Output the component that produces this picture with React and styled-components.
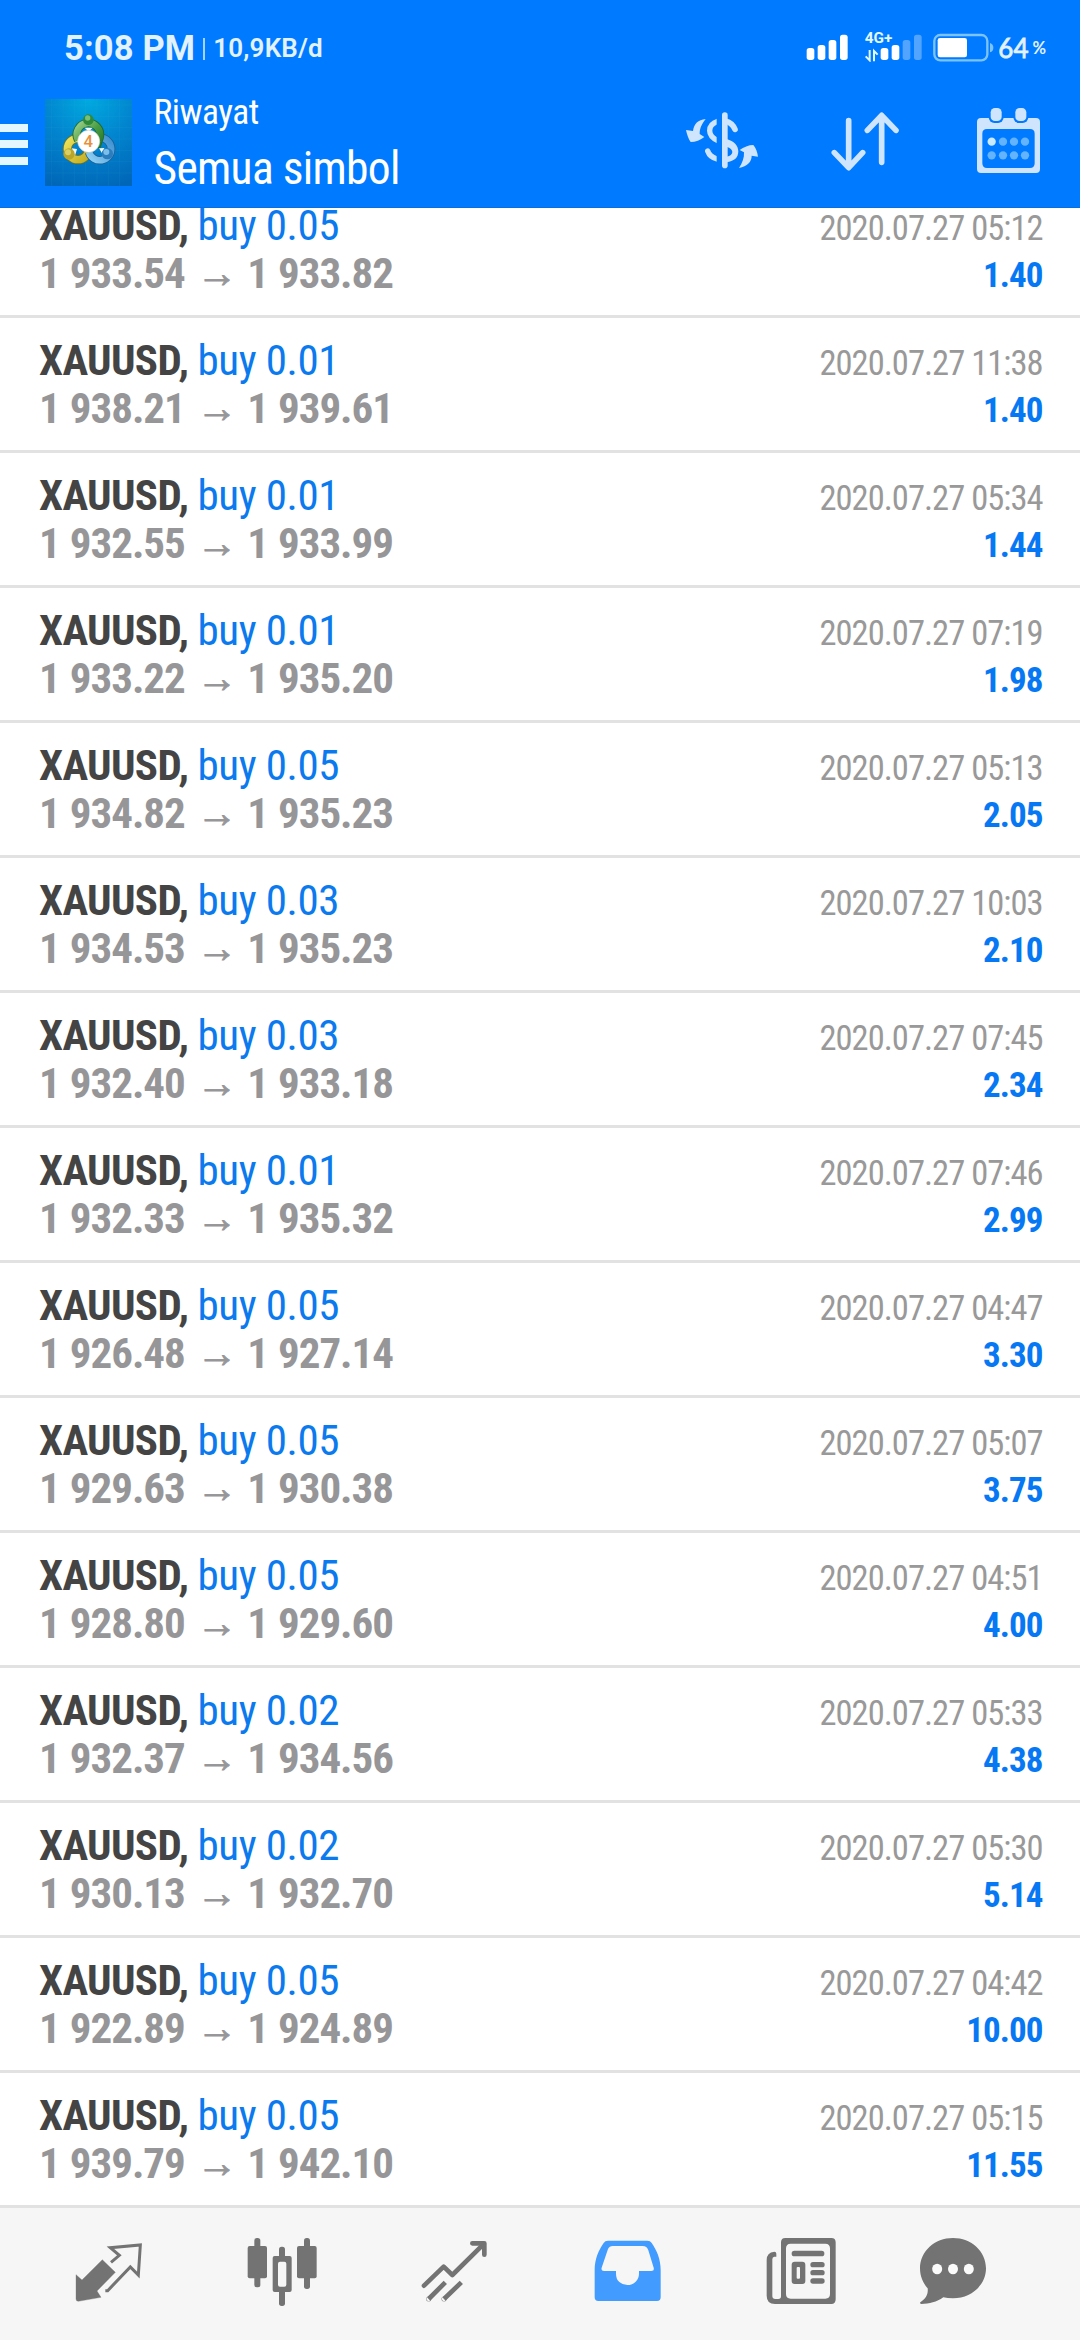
import React from "react";
import styled, { createGlobalStyle } from "styled-components";

const BLUE = "#007aff";
const GREY_ICON = "#737373";
const BAR_ICON = "#cfe5fd";

const GlobalStyle = createGlobalStyle`
  body {
    margin: 0;
    background: #fff;
    font-family: "Roboto Condensed", Roboto, sans-serif;
  }
  * { box-sizing: border-box; }
  svg { display: block; flex: none; }
`;

const Screen = styled.div`
  width: 1080px;
  height: 2340px;
  display: flex;
  flex-direction: column;
  overflow: hidden;
  background: #fff;
`;

const Header = styled.header`
  flex: none;
  height: 208px;
  background: ${BLUE};
  border-bottom: 1px solid #0a6fdc;
`;

const StatusBar = styled.div`
  height: 82px;
  padding: 18px 34px 0 64px;
  display: flex;
  justify-content: space-between;
  color: #e2f2ff;
  line-height: 60px;
  font-family: Roboto, sans-serif;
  white-space: nowrap;
`;

const StatusLeft = styled.div`
  display: flex;
`;

const Clock = styled.span`
  font-size: 34.5px;
  font-weight: 700;
  letter-spacing: 0.15px;
`;

const StatusDivider = styled.span`
  width: 2px;
  height: 22px;
  margin: 20px 8px 0;
  background: #a5d2ff;
`;

const NetSpeed = styled.span`
  font-size: 26px;
  font-weight: 600;
  letter-spacing: 0.2px;
`;

const StatusRight = styled.div`
  display: flex;
`;

const StatusGlyph = styled.svg`
  width: ${(p) => p.$w}px;
  height: 32px;
  margin: 12px ${(p) => p.$gap}px 0 0;
`;

const BatteryLevel = styled.span`
  font-family: Lato, sans-serif;
  font-size: ${(p) => p.$size}px;
  font-weight: ${(p) => p.$weight};
  margin-right: ${(p) => p.$gap || 0}px;
  -webkit-text-stroke: ${(p) => p.$stroke || 0}px currentColor;
`;

const AppBar = styled.div`
  height: 125px;
  display: flex;
  align-items: flex-start;
  padding-right: 39px;
`;

const MenuButton = styled.div`
  width: 28px;
  height: 41px;
  margin-top: 41.5px;
  display: flex;
  flex-direction: column;
  justify-content: space-between;
`;

const MenuLine = styled.span`
  height: 8px;
  background: #e4f7ff;
`;

const Logo = styled.svg`
  width: 87px;
  height: 87px;
  margin: 17px 0 0 16.5px;
`;

const Titles = styled.div`
  flex: 1;
  margin-left: 22px;
  padding-top: 7px;
  color: #fff;
  white-space: nowrap;
`;

const Subtitle = styled.div`
  font-size: 35.5px;
  line-height: 47px;
  letter-spacing: -0.5px;
`;

const Title = styled.div`
  font-size: 45.5px;
  line-height: 65px;
  letter-spacing: -0.7px;
`;

const Actions = styled.div`
  display: flex;
  margin-top: 24px;
`;

const ActionIcon = styled.svg`
  width: ${(p) => p.$w}px;
  height: 68px;
  margin-left: ${(p) => p.$gap || 0}px;
`;

const DealList = styled.main`
  flex: none;
  height: 2000px;
  display: flex;
  flex-direction: column;
  justify-content: flex-end;
  overflow: hidden;
`;

const DealRow = styled.div`
  flex: none;
  height: 135px;
  padding: 0 37.5px 0 39px;
  display: flex;
  justify-content: space-between;
  border-bottom: 3px solid #e2e2e2;
  line-height: 48px;
  white-space: pre;
`;

const DealInfo = styled.div`
  padding-top: 18px;
  font-size: 43px;
`;

const DealLine = styled.div`
  height: 48px;
  display: flex;
`;

const Symbol = styled.span`
  width: 158.5px;
  font-weight: 700;
  letter-spacing: -0.65px;
  color: #444;
`;

const Side = styled.span`
  letter-spacing: -0.4px;
  color: #0a7aee;
`;

const Price = styled.span`
  font-weight: 700;
  letter-spacing: -1.05px;
  word-spacing: 1.3px;
  color: #969698;
`;

const Arrow = styled.span`
  width: 62.5px;
  padding-left: 12px;
  font-family: "Liberation Sans", sans-serif;
  font-size: 41px;
  -webkit-text-stroke: 0.9px currentColor;
  color: #969698;
`;

const DealResult = styled.div`
  padding-top: 21px;
  text-align: right;
`;

const Time = styled.div`
  height: 48px;
  font-size: 34.5px;
  letter-spacing: -0.97px;
  color: #999;
`;

const Profit = styled.div`
  height: 48px;
  font-size: 35px;
  font-weight: 700;
  letter-spacing: -0.95px;
  color: #0778f4;
`;

const TabBar = styled.nav`
  flex: none;
  height: 132px;
  padding: 28px 0 0 22px;
  display: grid;
  grid-template-columns: repeat(5, 173px) 132px;
  justify-items: center;
  align-items: start;
  background: #f6f6f6;
`;

const TabIcon = styled.svg`
  width: ${(p) => p.$w}px;
  height: 72px;
`;

const deals = [
  ["0.05", "1 933.54", "1 933.82", "2020.07.27 05:12", "1.40"],
  ["0.01", "1 938.21", "1 939.61", "2020.07.27 11:38", "1.40"],
  ["0.01", "1 932.55", "1 933.99", "2020.07.27 05:34", "1.44"],
  ["0.01", "1 933.22", "1 935.20", "2020.07.27 07:19", "1.98"],
  ["0.05", "1 934.82", "1 935.23", "2020.07.27 05:13", "2.05"],
  ["0.03", "1 934.53", "1 935.23", "2020.07.27 10:03", "2.10"],
  ["0.03", "1 932.40", "1 933.18", "2020.07.27 07:45", "2.34"],
  ["0.01", "1 932.33", "1 935.32", "2020.07.27 07:46", "2.99"],
  ["0.05", "1 926.48", "1 927.14", "2020.07.27 04:47", "3.30"],
  ["0.05", "1 929.63", "1 930.38", "2020.07.27 05:07", "3.75"],
  ["0.05", "1 928.80", "1 929.60", "2020.07.27 04:51", "4.00"],
  ["0.02", "1 932.37", "1 934.56", "2020.07.27 05:33", "4.38"],
  ["0.02", "1 930.13", "1 932.70", "2020.07.27 05:30", "5.14"],
  ["0.05", "1 922.89", "1 924.89", "2020.07.27 04:42", "10.00"],
  ["0.05", "1 939.79", "1 942.10", "2020.07.27 05:15", "11.55"],
];

function SignalOne() {
  return (
    <StatusGlyph $w={43} $gap={15} viewBox="18 30 129 96" fill="#fff">
      <rect x="20" y="84" width="23" height="36" rx="8" />
      <rect x="53" y="75" width="23" height="45" rx="8" />
      <rect x="86" y="60" width="23" height="60" rx="8" />
      <rect x="120" y="44" width="23" height="76" rx="8" />
    </StatusGlyph>
  );
}

function SignalTwo() {
  return (
    <StatusGlyph $w={59} $gap={10} viewBox="192 30 177 96" fill="#fff">
      <text x="194" y="68" fontFamily="Roboto, sans-serif" fontWeight="700" fontSize="46" fill="#e2f8ff">4G+</text>
      <path d="M209 90V121L197 109M222 124V93L233 104" fill="none" stroke="#e2f8ff" strokeWidth="6" />
      <rect x="242" y="84" width="23" height="36" rx="8" />
      <rect x="275" y="75" width="23" height="45" rx="8" />
      <rect x="308" y="60" width="23" height="60" rx="8" opacity="0.32" />
      <rect x="342" y="44" width="23" height="76" rx="8" opacity="0.32" />
    </StatusGlyph>
  );
}

function Battery() {
  return (
    <StatusGlyph $w={61} $gap={4} viewBox="399 30 183 96">
      <rect x="403" y="45" width="159" height="76" rx="18" fill="none" stroke="#7cc4ff" strokeWidth="7" />
      <rect x="413" y="54" width="88" height="58" rx="7" fill="#fff" />
      <path d="M570 69Q580 72 580 83Q580 94 570 97Z" fill="#7cc4ff" />
    </StatusGlyph>
  );
}

function AppLogo() {
  return (
    <Logo viewBox="44 42 261 261">
      <defs>
        <radialGradient id="logoBg" cx="50%" cy="0%" r="105%">
          <stop offset="0" stopColor="#00aae0" />
          <stop offset="0.5" stopColor="#0284ce" />
          <stop offset="1" stopColor="#0067b8" />
        </radialGradient>
        <linearGradient id="logoGreen" x1="0" y1="0" x2="1" y2="1">
          <stop offset="0" stopColor="#9ad08a" />
          <stop offset="0.5" stopColor="#4d9f45" />
          <stop offset="1" stopColor="#23762c" />
        </linearGradient>
        <linearGradient id="logoYellow" x1="0" y1="0" x2="1" y2="1">
          <stop offset="0" stopColor="#ece25a" />
          <stop offset="1" stopColor="#c4ad22" />
        </linearGradient>
        <linearGradient id="logoBlue" x1="1" y1="0" x2="0" y2="1">
          <stop offset="0" stopColor="#3d8fd0" />
          <stop offset="1" stopColor="#8fd0f4" />
        </linearGradient>
      </defs>
      <rect x="44" y="42" width="261" height="261" fill="url(#logoBg)" />
      <path
        d="M64 42V303M98 42V303M132 42V303M166 42V303M200 42V303M234 42V303M268 42V303M44 60H305M44 94H305M44 128H305M44 162H305M44 196H305M44 230H305M44 264H305"
        stroke="#4cc0ec"
        strokeOpacity="0.14"
        strokeWidth="2"
      />
      <g fill="none">
        <circle cx="143" cy="192" r="32" stroke="#6f7420" strokeWidth="27" />
        <circle cx="143" cy="192" r="32" stroke="url(#logoYellow)" strokeWidth="22" />
        <path d="M212 158A34 34 0 1 1 176 202" stroke="#1b5f96" strokeWidth="25" />
        <path d="M212 158A34 34 0 1 1 176 202" stroke="url(#logoBlue)" strokeWidth="20" />
        <path d="M143 165A35 35 0 1 1 208 158L198 186" stroke="#1d6a30" strokeWidth="25" />
        <path d="M143 165A35 35 0 1 1 208 158L198 186" stroke="url(#logoGreen)" strokeWidth="20" />
      </g>
      <path d="M124 190L140 192L134 212ZM206 190L222 189L216 206ZM163 128H187L175 140Z" fill="#f4fbf4" />
      <circle cx="174" cy="104" r="16" fill="#2f8a3b" />
      <circle cx="172" cy="99" r="8" fill="#79bf78" />
      <circle cx="116" cy="207" r="17" fill="#b9a52a" />
      <circle cx="113" cy="202" r="9" fill="#d9cf66" />
      <circle cx="231" cy="206" r="17" fill="#2c7dbd" />
      <circle cx="228" cy="201" r="9" fill="#7cc0ea" />
      <circle cx="175" cy="169" r="33" fill="#fff" stroke="#d8d8d0" strokeWidth="2" />
      <text x="174" y="187" textAnchor="middle" fontFamily="Roboto, sans-serif" fontWeight="500" fontSize="50" fill="#e8903c">4</text>
    </Logo>
  );
}

function CurrencyIcon() {
  return (
    <ActionIcon $w={74} viewBox="45 48 222 204" fill={BAR_ICON}>
      <defs>
        <clipPath id="dollarLeft">
          <rect x="45" y="48" width="95" height="204" />
        </clipPath>
      </defs>
      <g clipPath="url(#dollarLeft)" fill="none" stroke={BAR_ICON} strokeWidth="16" strokeLinecap="round">
        <path d="M146 93C128 98 119 109 119 122C119 136 128 145 146 153" />
        <path d="M113 183C118 197 129 205 146 208" />
      </g>
      <rect x="156" y="67" width="17" height="168" rx="8.5" />
      <path d="M168 94C181 97 189 105 195 118" fill="none" stroke={BAR_ICON} strokeWidth="17" strokeLinecap="round" />
      <path d="M170 147C192 154 205 166 205 184C205 204 191 214 170 217V200C181 198 187 193 187 186C187 179 181 174 170 170Z" />
      <path d="M107 87C84 89 72 102 69 123L48 120C51 134 56 148 62 156C76 156 92 150 103 141L89 132C89 114 96 101 107 87Z" />
      <path d="M207 234C232 228 245 216 245 197L264 200C262 186 258 174 250 165C236 165 221 171 209 180L222 187C223 204 217 219 207 234Z" />
    </ActionIcon>
  );
}

function SortIcon() {
  return (
    <ActionIcon $w={70} $gap={71} viewBox="480 48 210 204" fill="none" stroke={BAR_ICON} strokeWidth="17" strokeLinecap="round" strokeLinejoin="round">
      <path d="M536 92V231M493 188L536 233L578 188" />
      <path d="M635 217V78M592 121L635 76L678 121" />
    </ActionIcon>
  );
}

function CalendarIcon() {
  const columns = [965, 999, 1032, 1065];
  return (
    <ActionIcon $w={65} $gap={76} viewBox="918 48 195 204">
      <path
        fill={BAR_ICON}
        fillRule="evenodd"
        d="M933 84H1098Q1110 84 1110 96V237Q1110 249 1098 249H933Q921 249 921 237V96Q921 84 933 84ZM951 117Q937 117 937 131V220Q937 234 951 234H1080Q1094 234 1094 220V131Q1094 117 1080 117Z"
      />
      {[962, 1036].map((x) => (
        <g key={x}>
          <rect x={x - 6} y="49" width="45" height="50" rx="17" fill={BLUE} />
          <rect x={x} y="54" width="33" height="39" rx="13" fill={BAR_ICON} />
        </g>
      ))}
      {[155, 196].map((y, row) =>
        columns.map((x, col) => (
          <circle key={`${x}-${y}`} cx={x} cy={y} r="12.5" fill={row === 0 && col === 0 ? "#c9eaff" : "#63b3ff"} />
        ))
      )}
    </ActionIcon>
  );
}

function QuotesIcon() {
  return (
    <TabIcon $w={68} viewBox="45 48 204 216">
      <path d="M127 119L166 157L111 213L123 232L55 244Q48 244 48 237V164L66 180Z" fill={GREY_ICON} stroke={GREY_ICON} strokeWidth="1" strokeLinejoin="round" />
      <path d="M153 127L178 106L151 83L241 75L235 165L211 141L143 212H136" fill="none" stroke={GREY_ICON} strokeWidth="9" />
    </TabIcon>
  );
}

function ChartIcon() {
  return (
    <TabIcon $w={72} viewBox="555 48 216 216" fill={GREY_ICON}>
      <rect x="580" y="54" width="18" height="148" rx="8" />
      <rect x="560" y="78" width="58" height="97" rx="6" />
      <rect x="654" y="80" width="18" height="40" rx="8" />
      <rect x="654" y="205" width="18" height="53" rx="8" />
      <path fillRule="evenodd" d="M641 108H686Q692 108 692 114V210Q692 216 686 216H641Q635 216 635 210V114Q635 108 641 108ZM657 125Q651 125 651 131V194Q651 200 657 200H670Q676 200 676 194V131Q676 125 670 125Z" />
      <rect x="729" y="54" width="18" height="153" rx="8" />
      <rect x="708" y="78" width="59" height="97" rx="6" />
    </TabIcon>
  );
}

function TradeIcon() {
  return (
    <TabIcon $w={67} viewBox="1083 48 201 216" fill="none" stroke={GREY_ICON} strokeWidth="14" strokeLinejoin="round">
      <path d="M1092 197L1151 140L1177 165L1270 73" strokeLinecap="round" />
      <path d="M1237 70H1273V104" strokeLinecap="round" />
      <path d="M1106 237L1156 187M1152 237L1204 187" />
      <circle cx="1106" cy="237" r="0.5" />
      <circle cx="1152" cy="237" r="0.5" />
    </TabIcon>
  );
}

function HistoryIcon() {
  return (
    <TabIcon $w={67} viewBox="42 48 201 216">
      <path
        fill="#429bff"
        fillRule="evenodd"
        d="M84 62H202Q211 62 215 69C230 90 242 118 242 150V232Q242 243 231 243H55Q44 243 44 232V150C44 118 56 90 71 69Q75 62 84 62ZM98 78Q88 78 84 87L65 143Q62 153 72 153H108V161Q108 177 118 186Q128 195 142 195Q157 195 167 185Q177 175 177 161V153H214Q224 153 221 143L205 91Q201 78 188 78Z"
      />
    </TabIcon>
  );
}

function NewsIcon() {
  return (
    <TabIcon $w={70} viewBox="558 48 210 216" fill={GREY_ICON}>
      <path
        fillRule="evenodd"
        d="M616 54H754Q767 54 767 67V238Q767 252 754 252H585Q560 252 560 227V120Q560 97 583 95Q589 95 589 101V110H583Q577 110 577 118V228Q577 237 586 237H595Q603 237 603 229V67Q603 54 616 54ZM632 71Q618 71 618 85V222Q618 236 632 236H736Q750 236 750 222V85Q750 71 736 71Z"
      />
      <rect x="635" y="92" width="98" height="17" rx="8" />
      <path fillRule="evenodd" d="M644 125H667Q676 125 676 134V183Q676 192 667 192H644Q635 192 635 183V134Q635 125 644 125ZM653 141Q650 141 650 144V173Q650 176 653 176H657Q660 176 660 173V144Q660 141 657 141Z" />
      <rect x="691" y="126" width="43" height="16" rx="8" />
      <rect x="691" y="150" width="43" height="16" rx="8" />
      <rect x="691" y="175" width="43" height="16" rx="8" />
    </TabIcon>
  );
}

function ChatIcon() {
  return (
    <TabIcon $w={68} viewBox="1017 48 204 216">
      <path
        fill={GREY_ICON}
        d="M1119 54C1174 54 1218 94 1218 145C1218 195 1174 235 1119 235Q1102 235 1090 232C1070 246 1048 252 1024 252Q1017 250 1022 246C1038 235 1045 222 1043 205C1029 189 1020 169 1020 145C1020 94 1064 54 1119 54Z"
      />
      {[1071.5, 1119, 1166.5].map((x) => (
        <ellipse key={x} cx={x} cy="147" rx="15" ry="15.5" fill="#fbfbfb" />
      ))}
    </TabIcon>
  );
}

export default function App() {
  return (
    <Screen>
      <GlobalStyle />
      <Header>
        <StatusBar>
          <StatusLeft>
            <Clock>5:08 PM</Clock>
            <StatusDivider />
            <NetSpeed>10,9KB/d</NetSpeed>
          </StatusLeft>
          <StatusRight>
            <SignalOne />
            <SignalTwo />
            <Battery />
            <BatteryLevel $size={26} $weight={400} $stroke={0.8} $gap={4}>64</BatteryLevel>
            <BatteryLevel $size={16.5} $weight={700}>%</BatteryLevel>
          </StatusRight>
        </StatusBar>
        <AppBar>
          <MenuButton>
            <MenuLine />
            <MenuLine />
            <MenuLine />
          </MenuButton>
          <AppLogo />
          <Titles>
            <Subtitle>Riwayat</Subtitle>
            <Title>Semua simbol</Title>
          </Titles>
          <Actions>
            <CurrencyIcon />
            <SortIcon />
            <CalendarIcon />
          </Actions>
        </AppBar>
      </Header>
      <DealList>
        {deals.map(([lots, open, close, time, profit]) => (
          <DealRow key={time}>
            <DealInfo>
              <DealLine>
                <Symbol>XAUUSD,</Symbol>
                <Side>buy {lots}</Side>
              </DealLine>
              <DealLine>
                <Price>{open}</Price>
                <Arrow>→</Arrow>
                <Price>{close}</Price>
              </DealLine>
            </DealInfo>
            <DealResult>
              <Time>{time}</Time>
              <Profit>{profit}</Profit>
            </DealResult>
          </DealRow>
        ))}
      </DealList>
      <TabBar>
        <QuotesIcon />
        <ChartIcon />
        <TradeIcon />
        <HistoryIcon />
        <NewsIcon />
        <ChatIcon />
      </TabBar>
    </Screen>
  );
}
